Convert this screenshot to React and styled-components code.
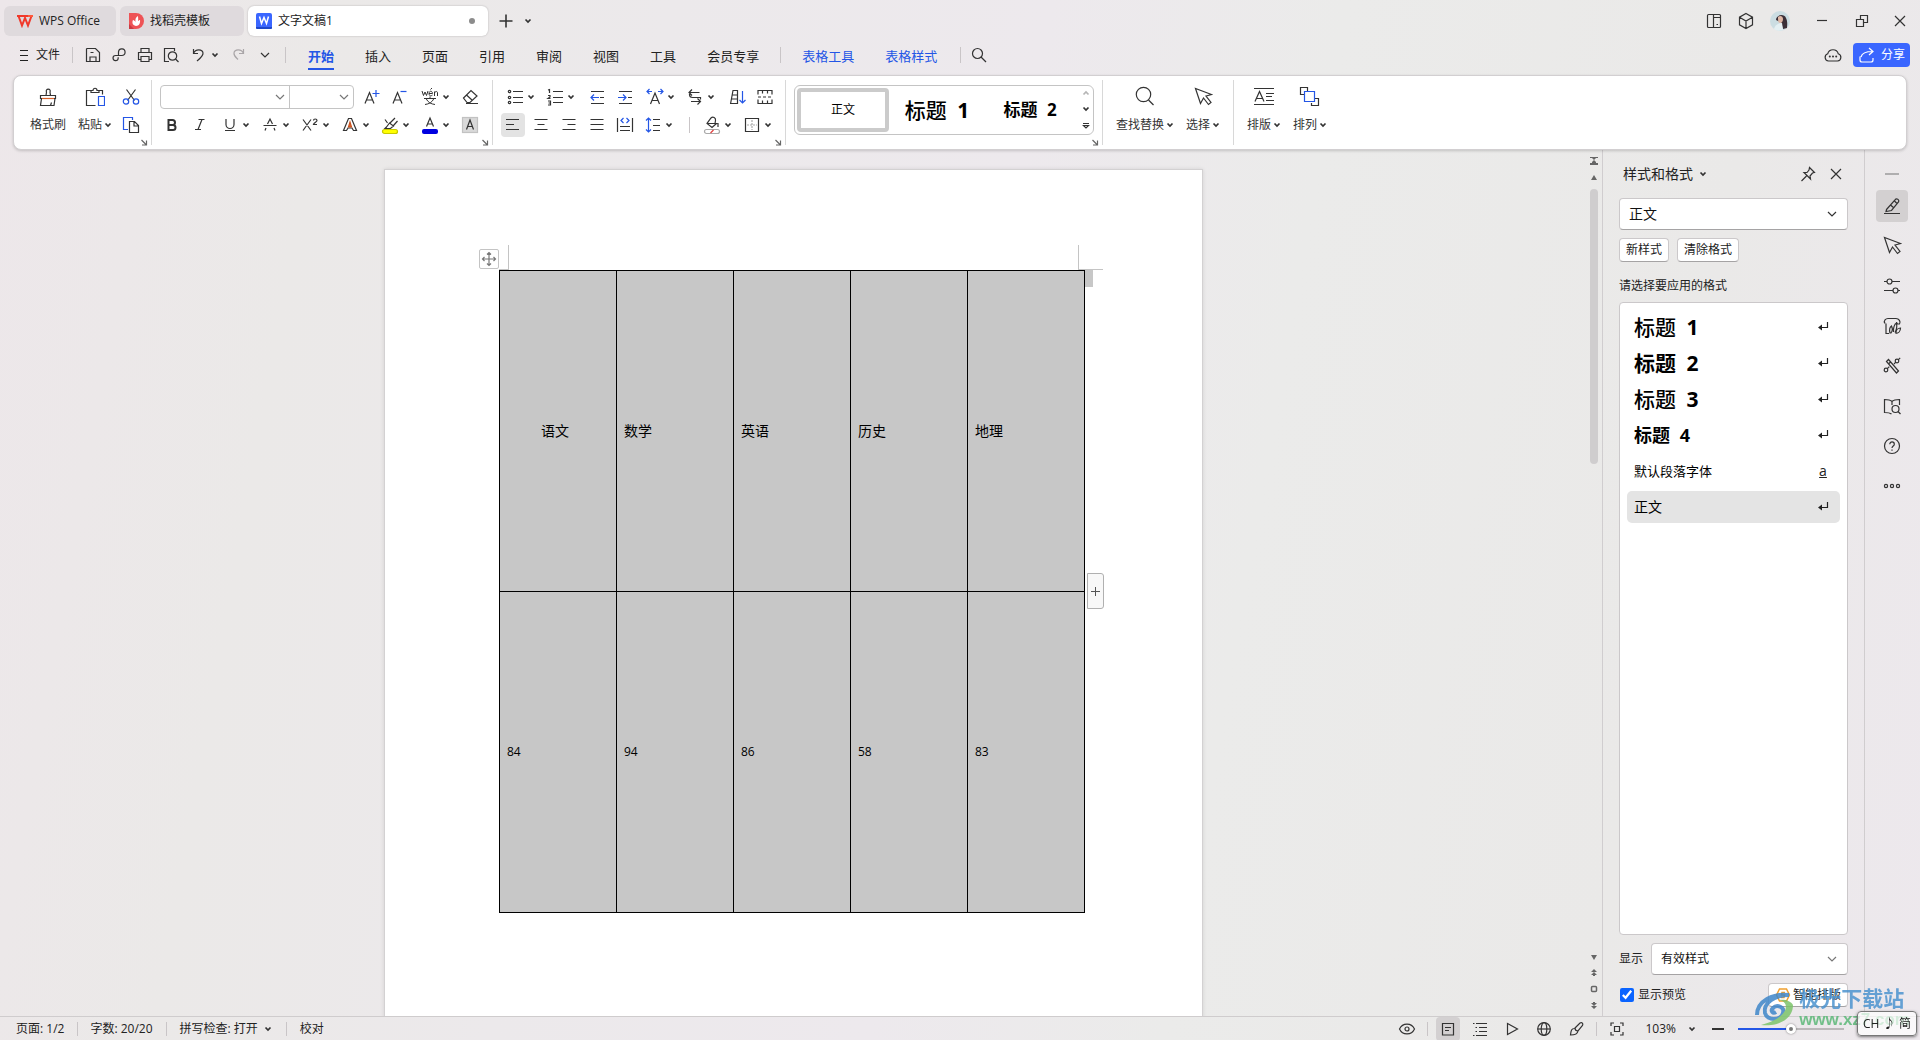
import React from "react";
import styled, { createGlobalStyle, css } from "styled-components";

const BLUE = "#2456e6";
const INK = "#333333";

const GlobalStyle = createGlobalStyle`
  *, *::before, *::after { box-sizing: border-box; }
  body { margin: 0; }
  body, button, input, select {
    font-family: "Open Sans", "Noto Sans CJK SC", sans-serif;
    font-size: 12px;
    line-height: 16px;
    color: #222222;
  }
  button { border: 0; padding: 0; background: none; cursor: pointer; }
  svg { display: block; flex: none; }
`;

const Shell = styled.div`
  height: 100vh;
  display: flex;
  flex-direction: column;
  overflow: hidden;
  background: linear-gradient(100deg, #ede7ea 0%, #ebe9e8 16%, #ece9eb 32%, #ede9ed 50%, #ebebea 64%, #eae9e8 84%, #ede8ed 100%);
`;

/* ---------- icons ---------- */

const Svg = styled.svg`
  fill: none;
  stroke: currentColor;
  stroke-width: ${(p) => p.$w || 1.2};
`;
const Icon = ({ size = 20, w, children }) => (
  <Svg width={size} height={size} viewBox={`0 0 ${size} ${size}`} $w={w} aria-hidden="true">
    {children}
  </Svg>
);
const ChevSvg = styled.svg`
  fill: none;
  stroke: ${(p) => p.$c || "#333333"};
  stroke-width: ${(p) => (p.$wide ? 1.2 : 1.7)};
`;
const Chevron = ({ wide, color }) =>
  wide ? (
    <ChevSvg $wide $c={color} width="10" height="8" viewBox="0 0 10 8" aria-hidden="true">
      <path d="M1 2l4 4 4-4" />
    </ChevSvg>
  ) : (
    <ChevSvg $c={color} width="8" height="6" viewBox="0 0 8 6" aria-hidden="true">
      <path d="M1.500 1.500L4 4l2.500-2.500" />
    </ChevSvg>
  );

const PATHS = {
  save: <><path d="M3.500 4v12.500h13V7.500l-4-4h-8.500zM7 16.500v-4.500h6v4.500M7.500 7.500h3" /></>,
  exportLink: <><path d="M9.500 10.500V6.800a3.300 3.300 0 1 1 3.300 3.700H6.500a2.600 2.600 0 1 0 2.700 2.800v-1" /></>,
  print: <><path d="M6 7.500v-4h8v4M6 14.500H3.500v-7h13v7H14M6 11.500h8v5H6z" /></>,
  preview: <><path d="M8 16.500H3.500v-13h10V6M3.500 3.500h9" /><circle cx="11.500" cy="11" r="4.200" /><path d="M14.500 14l3 3" /></>,
  undo: <path d="M5.500 4v4.500H10M5.500 8.500c2-5 9-4.500 9.500-.5.300 3-3 5.500-6 8" />,
  redo: <path d="M14.500 4v4.500H10M14.500 8.500c-2-5-9-4.500-9.500-.5-.300 3 2 4.500 4 6.500" />,
  search: <><circle cx="8.500" cy="8.500" r="5" /><path d="M12 12l5 5" /></>,
  brush: <><path d="M2.500 8.500h15v3h-15zM3.500 11.500L2.500 18.500h13.500l1-7M8 8.500l.500-3.500a2 2 0 1 1 3.500 0l.500 3.500M12.500 18.500l1-3" /><path d="M4 11.500h12" stroke="#d8622c" /></>,
  paste: <><path d="M6 3.500H1.500v15h9M14.500 3.500H17.500v4M6 5.500v-2h2c0-3 4-3 4 0h2v2z" /><path d="M13.500 9.500h6v9h-6z" stroke={BLUE} /></>,
  cut: <><path d="M5.500 2.500l8 11M14.500 2.500l-8 11" /><g stroke={BLUE}><circle cx="5" cy="14.500" r="2.700" /><circle cx="15" cy="14.500" r="2.700" /></g></>,
  copy: <><path d="M7 14.500H2.500v-12h9V5" stroke={BLUE} /><path d="M8.500 6.500h5l4 4v7h-9zM13 6.500v4.500h4.500" /></>,
  eraser: <><path d="M3.500 11l7.500-7.500L17 9l-7 6.500H7zM6.500 8l6 5.500M6 16.500h12" /></>,
  bullets: <><path d="M8 4.500h10M8 10.500h10M8 15.500h10" /><g><circle cx="4.500" cy="4.500" r="1.200" /><circle cx="4.500" cy="10.500" r="1.200" /><circle cx="4.500" cy="15.500" r="1.200" /></g></>,
  outdent: <><path d="M4 4.500h13M13 10.500h4M4 16.500h13" /><path d="M4 10.500h8M7 7.500l-3 3 3 3" stroke={BLUE} /></>,
  indent: <><path d="M4 4.500h13M13 10.500h4M4 16.500h13" /><path d="M3 10.500h8M8 7.500l3 3-3 3" stroke={BLUE} /></>,
  charWidth: <><path d="M5.500 17L10 6l4.500 11M7 13.500h6" /><path d="M2 4.500h5M13 4.500h5M4.500 2L2 4.500 4.500 7M15.500 2L18 4.500 15.500 7" stroke={BLUE} /></>,
  direction: <><path d="M7 2.500L4 5.500l3 3M4 5.500h10.500M4.500 5.500v2a3 3 0 0 0 3 3h8v2M6 14.500h9.500M12.500 11.500l3 3-3 3" /></>,
  sort: <><path d="M3.500 17l2.500-13.500h4.500V17M5.500 8h5M4.500 12h6M3 16.500h7.500" /><path d="M15.500 4v12M12.500 13l3 3 3-3" stroke={BLUE} /></>,
  tableGrid: <><path d="M3 7.500v-4h14v4M3 12.500v4h14v-4M7.500 3.500v3M12.500 3.500v3M7.500 13.500v3M12.500 13.500v3" /><path d="M3 10h14" strokeDasharray="3 2" /></>,
  alignLeft: <path d="M3 4.500h13M3 9.500h8M3 14.500h13" />,
  alignCenter: <path d="M3.500 4.500h13M6.500 9.500h7M3.500 14.500h13" />,
  alignRight: <path d="M3.500 4.500h13M8.500 9.500h8M3.500 14.500h13" />,
  justify: <path d="M3.500 4.500h13M3.500 9.500h13M3.500 14.500h13" />,
  distribute: <><path d="M2.500 3v14M17.500 3v14M5 11.500h10M5 15.500h10" /><path d="M8.500 3L6 5.500 8.500 8M11.500 3L14 5.500 11.500 8" stroke={BLUE} /></>,
  lineSpacing: <><path d="M10 4.500h7M10 10.500h7M10 15.500h7" /><path d="M5.500 3v14M3 5.500L5.500 3 8 5.500M3 14.500L5.500 17 8 14.500" stroke={BLUE} /></>,
  fill: <><path d="M5 8.500h9.500L10 12.500 5 8.500l4-5.500c2-2 5 0 4.500 2.500L13 8.500M16 8v4" /><rect x="2.500" y="14.500" width="15" height="4" rx="2" stroke="#aaa" /><path d="M8.500 18l3-3" stroke="#e04040" /></>,
  border: <><path d="M3.500 3.500h13v13h-13z" /><path d="M10 5v10M5 10h10" stroke="#aaa" strokeDasharray="2 1" /></>,
  bigSearch: <><circle cx="9.500" cy="8.500" r="7.200" /><path d="M14.500 14l5 5" /></>,
  pointer: <path d="M2.500 1.500l5 15 3-5.500 5 6.500 2.500-2-5-6.500 5.500-1.500z" />,
  layoutText: <><path d="M1 2.500h20M1 18.500h20M13 7.500h8M13 10.500h6M13 14.500h8M2 15.500L6.500 5.500 11 15.500M3.500 12.500h6" /></>,
  arrange: <><path d="M5 8.500H1.500v-7h7V5M16 12.500h3.500v7h-7V17" /><path d="M5.500 5.500h10v10h-10z" stroke={BLUE} /></>,
  split: <><rect x="3.500" y="3.500" width="13" height="13" rx="1" /><path d="M9.500 3.500v13M9.500 6.500h7M12.500 13.500h1.500" /></>,
  cube: <><path d="M10 2.500l6.500 3.700v7.600L10 17.500l-6.500-3.700V6.200zM3.500 6.200L10 10l6.500-3.800M10 10v7.500" /></>,
  minimise: <path d="M5 9.500h10" />,
  railMinus: <path d="M3 10h14" />,
  restore: <><path d="M4.500 8.500h7v7h-7z" /><path d="M8.500 8.500v-4h7v7h-4" /></>,
  close: <path d="M5 5l10 10M15 5L5 15" />,
  cloud: <><path d="M5.500 16a3.700 3.700 0 0 1-.8-7.200 5.500 5.500 0 0 1 10.600 0 3.700 3.700 0 0 1-.8 7.200z" /><g fill="currentColor" stroke="none"><circle cx="6.800" cy="11.500" r="1" /><circle cx="10" cy="11.500" r="1" /><circle cx="13.200" cy="11.500" r="1" /></g></>,
  share: <><path d="M3 11.500v3.500a2 2 0 0 0 2 2h9a2 2 0 0 0 2-2v-2M4 12c1-4 5-5.500 11.500-5.500M12 3l4 3.500-4 3.500" /></>,
  pin: <path d="M11.500 3.500l5 5-2 .500-2.500 3 .5 3-6.500-6.500h3l2-2.500zM8.500 12l-5 5" />,
  pen: <><path d="M4.500 13.500l8.500-9.500a2 2 0 0 1 3.500 2l-7 8.500-5.500 1zM8.500 9l3.500 3M2 17.500h16M12 4.500l3 3" /></>,
  sliders: <><circle cx="7.500" cy="5.500" r="2.500" /><circle cx="13.500" cy="14.500" r="2.500" /><path d="M2 5.500h3M10 5.500h8M2 14.500h9M16 14.500h2" /></>,
  chartDoc: <><path d="M4 7.500V17.500h3M3 7.500c-2-3 1-5 3-5h8c3 0 5 3 3.500 5.500h-2c-1-1-1-2-1-2" /><path d="M8 17c-1-4 0-6 1.500-7 1 2 1 5-.5 7zM11.500 16c-.5-4 1-8 3-9 .5 3 0 7-1.500 9.500M14 17c0-3 2-5 4.500-5 0 3-2 5.500-5 5.500" /></>,
  magic: <><path d="M4.500 5.500l2-2 10 11.500-2 2zM6.500 8l2-2" /><circle cx="15" cy="5" r="1.800" /><path d="M16.200 3.800l2-2M13.800 6.200L12 8" /><circle cx="4" cy="14" r="1.800" /><path d="M5.300 12.700l2-2" /></>,
  bookSearch: <><path d="M10 5.500c-2-2-4.500-2-7.500-2v13c3 0 5 0 7 1.500M10 5.500c2-2 4.500-2 7.500-2V9M10 5.500V9" /><circle cx="13.500" cy="13" r="3.500" /><path d="M16 15.500l2.500 2.500" /></>,
  help: <><circle cx="10" cy="10" r="7.500" /><path d="M7.800 8.200c0-3 4.500-3 4.500 0 0 1.800-2.300 1.800-2.300 3.800M10 13.500v1.300" /></>,
  more: <><circle cx="4" cy="10" r="1.600" /><circle cx="10" cy="10" r="1.600" /><circle cx="16" cy="10" r="1.600" /></>,
  eye: <><path d="M2.500 10c3-6.500 12-6.500 15 0-3 6.500-12 6.500-15 0z" /><circle cx="10" cy="10" r="2" /></>,
  pageView: <><path d="M4.500 4.500h11v11.500h-11zM7 8.500h6M7 11.500h4" /></>,
  outline: <><path d="M6 4.500h11M9 8.500h8M9 12.500h8M6 16.500h11M3 4.500h1.500M5.500 8.500h1.500M5.500 12.500h1.500M3 16.500h1.500" /></>,
  play: <path d="M5.500 4.500v11l10-5.500z" />,
  globe: <><circle cx="10" cy="10" r="6.300" /><ellipse cx="10" cy="10" rx="2.800" ry="6.300" /><path d="M3.700 10h12.600" /></>,
  pencil: <path d="M9 9l5-5c2-1 3.500.500 2.500 2.500L12 12c-2 0-3-1-3-3zM8.500 9.500c-3 0-3.500 2-4 6.500 4 0 7-1 7.500-4" />,
  fit: <><path d="M4 7V4h3M13 4h3v3M16 13v3h-3M7 16H4v-3" /><path d="M7.500 7.500h5v5h-5z" /></>,
  enter: <><path d="M14.500 5v5.500H6" /><path d="M9 7.500v6L5 10.500z" fill="currentColor" stroke="none" /></>,
};
const I = ({ n, size, w }) => <Icon size={size} w={w}>{PATHS[n]}</Icon>;

/* ---------- title bar ---------- */

const TitleBar = styled.header`
  flex: none;
  display: flex;
  align-items: center;
  gap: 4px;
  height: 40px;
  padding: 2px 2px 0 4px;
`;
const Tab = styled.button`
  display: flex;
  align-items: center;
  gap: 6px;
  width: ${(p) => p.$w}px;
  height: 30px;
  padding: 0 ${(p) => p.$pad || 8}px;
  border-radius: 6px;
  white-space: nowrap;
  background: ${(p) => (p.$active ? "#ffffff" : "#dfdadd")};
  box-shadow: ${(p) => (p.$active ? "0 0 2px rgba(0,0,0,.25)" : "none")};
`;
const UnsavedDot = styled.i`
  width: 6px;
  height: 6px;
  margin: 0 5px 0 auto;
  border-radius: 50%;
  background: #8c8c8c;
`;
const IconButton = styled.button`
  display: flex;
  flex: none;
  align-items: center;
  justify-content: center;
  width: ${(p) => p.$w || 24}px;
  height: ${(p) => p.$h || 24}px;
  border-radius: 4px;
  color: ${(p) => (p.$muted ? "#aaa6a8" : INK)};
  background: ${(p) => (p.$on ? p.$onColor || "#e3e3e3" : "transparent")};
  margin-left: ${(p) => (p.$lead ? 4 : 0)}px;
`;
const TitleTools = styled.div`
  display: flex;
  align-items: center;
  margin-left: auto;
`;
const WindowButtons = styled.div`
  display: flex;
  margin-left: 4px;
`;

/* ---------- menu row ---------- */

const MenuRow = styled.nav`
  flex: none;
  display: flex;
  align-items: center;
  height: 35px;
  padding: 0 10px 6px 16px;
`;
const FileButton = styled.button`
  display: flex;
  align-items: center;
  gap: 4px;
`;
const VLine = styled.i`
  flex: none;
  width: 1px;
  height: ${(p) => p.$h || 16}px;
  margin: 0 ${(p) => p.$r || 0}px 0 ${(p) => p.$l || 0}px;
  background: #c9c5c7;
`;
const QuickTools = styled.div`
  display: flex;
  align-items: center;
  gap: 2px;
`;
const UndoButton = styled.button`
  display: flex;
  align-items: center;
  gap: 3px;
  margin: 0 6px 0 3px;
  color: ${INK};
`;
const MenuTabs = styled.div`
  display: flex;
  gap: 31px;
`;
const MenuTab = styled.button`
  font-size: 13px;
  line-height: 24px;
  height: 26px;
  margin-top: 4px;
  white-space: nowrap;
  color: ${(p) => (p.$blue || p.$active ? BLUE : "#222222")};
  font-weight: ${(p) => (p.$active ? 700 : 400)};
  border-bottom: 2px solid ${(p) => (p.$active ? BLUE : "transparent")};
`;
const MenuEnd = styled.div`
  display: flex;
  align-items: center;
  gap: 8px;
  margin-left: auto;
`;
const ShareButton = styled.button`
  display: flex;
  align-items: center;
  gap: 4px;
  height: 24px;
  padding: 0 5px 0 4px;
  border-radius: 4px;
  color: #ffffff;
  background: #3a66ff;
`;

/* ---------- ribbon ---------- */

const Ribbon = styled.section`
  flex: none;
  display: flex;
  height: 75px;
  margin: 0 13px;
  padding-left: 8px;
  border: 1px solid #d2cfd1;
  border-radius: 8px;
  background: #ffffff;
  box-shadow: 0 1px 3px rgba(0, 0, 0, 0.18);
  position: relative;
  z-index: 1;
`;
const Group = styled.div`
  position: relative;
  display: flex;
  flex-direction: ${(p) => (p.$rows ? "column" : "row")};
  gap: ${(p) => (p.$rows ? 4 : p.$gap || 0)}px;
  margin: 4px 0;
  padding: 5px ${(p) => p.$px || (p.$rows ? 10 : 8)}px 5px ${(p) => p.$px || 8}px;
  border-right: 1px solid ${(p) => (p.$last ? "transparent" : "#d8d8d8")};
`;
const Row = styled.div`
  display: flex;
  align-items: center;
  gap: ${(p) => (p.$gap === undefined ? 8 : p.$gap)}px;
  height: 24px;
  padding-left: ${(p) => (p.$inset ? 2 : 0)}px;
`;
const Column = styled.div`
  display: flex;
  flex-direction: column;
  gap: 4px;
  margin-left: -5px;
`;
const BigButton = styled.button`
  display: grid;
  grid-template-rows: 24px 24px;
  gap: 4px;
  place-items: center;
  color: ${INK};
`;
const BigLabel = styled.span`
  display: flex;
  align-items: center;
  gap: 2px;
  white-space: nowrap;
`;
const SplitButton = styled.button`
  display: flex;
  align-items: center;
  width: 32px;
  height: 24px;
  margin-left: ${(p) => (p.$lead ? 4 : 0)}px;
  color: ${INK};
`;
const Glyph = styled.span`
  display: flex;
  justify-content: center;
  width: 24px;
`;
const Launcher = styled.button`
  position: absolute;
  right: 2px;
  bottom: -2px;
  color: #666666;
`;
const FontBoxes = styled.div`
  display: flex;
  width: 194px;
  height: 24px;
  border: 1px solid #c4c4c4;
  border-radius: 4px;
`;
const Combo = styled.label`
  display: flex;
  flex: ${(p) => p.$grow} 0 0;
  align-items: center;
  padding-right: 4px;
  min-width: 0;
  & + & { border-left: 1px solid #c4c4c4; }
  input { flex: 1; min-width: 0; border: 0; outline: 0; background: none; }
`;
const Gallery = styled.div`
  display: flex;
  align-items: center;
  width: 300px;
  height: 50px;
  padding: 0 3px 0 2px;
  border: 1px solid #c4c4c4;
  border-radius: 6px;
`;
const StyleCard = styled.button`
  width: ${(p) => p.$w}px;
  height: 44px;
  border: 4px solid ${(p) => (p.$on ? "#cbcbcb" : "transparent")};
  border-radius: 4px;
  color: #000000;
`;
const Heading = styled.span`
  font-size: ${(p) => p.$size}px;
  line-height: 28px;
  font-weight: ${(p) => p.$weight || 400};
  color: #000000;
  white-space: nowrap;
`;
const HeadingNumber = styled.span`
  margin-left: 5px;
  font-family: "Noto Sans", sans-serif;
  font-weight: 700;
`;
const GalleryNav = styled.div`
  display: flex;
  flex-direction: column;
  align-items: center;
  justify-content: space-between;
  height: 40px;
  margin-left: auto;
`;

/* ---------- work area ---------- */

const Work = styled.main`
  flex: 1;
  display: flex;
  min-height: 0;
`;
const Canvas = styled.section`
  flex: 1;
  display: flex;
  justify-content: center;
  min-width: 0;
  padding-top: 19px;
  overflow: hidden;
`;
const Paper = styled.article`
  flex: none;
  width: 819px;
  height: 1160px;
  padding: 100px 114px;
  border: 1px solid #d3d1d2;
  background: #ffffff;
  box-shadow: 0 0 4px rgba(0, 0, 0, 0.1);
`;
const TableFrame = styled.div`
  position: relative;
  width: 586px;
`;
const DataTable = styled.table`
  width: 100%;
  table-layout: fixed;
  border-collapse: collapse;
  background: #c7c7c7;
`;
const Cell = styled.td`
  height: 321px;
  padding: ${(p) => (p.$center ? "0 6px 0 0" : "0 7px")};
  border: 1px solid #000000;
  text-align: ${(p) => (p.$center ? "center" : "left")};
  vertical-align: middle;
  font-size: ${(p) => (p.$number ? 12 : 14)}px;
  color: #000000;
`;
const MoveHandle = styled.button`
  position: absolute;
  left: -20px;
  top: -21px;
  padding: 1px;
  border: 1px solid #c4c4c4;
  border-radius: 2px;
  color: #777777;
  background: #ffffff;
`;
const MarginMark = styled.i`
  position: absolute;
  top: -25px;
  ${(p) => (p.$right ? css`left: 579px; width: 25px; border-left: 1px solid #c4c4c4;` : css`left: 0; width: 10px; border-right: 1px solid #c4c4c4;`)}
  height: 25px;
  border-bottom: 1px solid #c4c4c4;
`;
const RowEnd = styled.i`
  position: absolute;
  left: 586px;
  top: 0;
  width: 8px;
  height: 17px;
  background: #c7c7c7;
`;
const AddColumn = styled.button`
  position: absolute;
  left: 588px;
  top: 303px;
  width: 17px;
  height: 36px;
  display: grid;
  place-items: center;
  border: 1px solid #b0b0b0;
  border-radius: 0 3px 3px 0;
  color: #555555;
  background: #f8f8f8;
`;
const ScrollColumn = styled.div`
  display: flex;
  flex-direction: column;
  align-items: center;
  width: 15px;
  padding: 7px 2px 7px 0;
  gap: 8px;
  color: #666666;
`;
const ScrollThumb = styled.i`
  width: 8px;
  height: 275px;
  margin-bottom: auto;
  border-radius: 4px;
  background: #cfcdce;
`;

/* ---------- styles panel ---------- */

const Panel = styled.aside`
  flex: none;
  display: flex;
  flex-direction: column;
  width: 262px;
  padding: 8px 16px 9px 16px;
  border-left: 1px solid #d0cdcf;
`;
const PanelHeader = styled.div`
  display: flex;
  align-items: center;
  height: 32px;
  padding-left: 4px;
`;
const PanelTitle = styled.button`
  display: flex;
  align-items: center;
  gap: 6px;
  margin-right: auto;
  font-size: 14px;
  line-height: 20px;
`;
const SelectBox = styled.span`
  flex: 1;
  display: grid;
  align-items: center;
  height: 32px;
  border: 1px solid #cbc8ca;
  border-bottom-color: #a5a3a4;
  border-radius: 4px;
  background: #ffffff;
  > * { grid-area: 1 / 1; }
  > svg { justify-self: end; margin-right: 10px; pointer-events: none; }
  select {
    appearance: none;
    width: 100%;
    height: 30px;
    padding: 0 9px;
    border: 0;
    outline: 0;
    background: none;
    font-size: ${(p) => p.$size}px;
    color: #111111;
  }
`;
const PanelRow = styled.div`
  display: flex;
  align-items: center;
  gap: 8px;
  margin-top: 8px;
`;
const SmallButton = styled.button`
  display: flex;
  align-items: center;
  gap: 2px;
  height: 24px;
  padding: 0 6px;
  border: 1px solid #cbc8ca;
  border-bottom-color: #a5a3a4;
  border-radius: 4px;
  background: #ffffff;
  white-space: nowrap;
`;
const ListLabel = styled.div`
  margin-top: 8px;
  line-height: 32px;
`;
const StyleList = styled.ul`
  flex: 1;
  display: flex;
  flex-direction: column;
  gap: 4px;
  min-height: 0;
  margin: 0;
  padding: 8px 7px;
  list-style: none;
  border: 1px solid #cbc8ca;
  border-radius: 4px;
  background: #ffffff;
`;
const StyleItem = styled.button`
  display: flex;
  align-items: center;
  justify-content: space-between;
  width: 100%;
  height: 32px;
  padding: 0 7px;
  border-radius: 5px;
  background: ${(p) => (p.$on ? "#e4e4e4" : "transparent")};
`;
const CharMark = styled.span`
  width: 20px;
  font-size: 14px;
  text-align: center;
  text-decoration: underline;
`;
const CheckLabel = styled.label`
  display: flex;
  align-items: center;
  gap: 4px;
  margin-right: auto;
  input { width: 14px; height: 14px; margin: 0 0 0 1px; accent-color: #0a64ff; }
`;
const Rail = styled.nav`
  flex: none;
  display: flex;
  flex-direction: column;
  align-items: center;
  gap: 8px;
  width: 56px;
  padding-right: 2px;
  border-left: 1px solid #d0cdcf;
  > :first-child { margin: 8px 0 -8px; color: #888888; }
`;

/* ---------- status bar ---------- */

const StatusBar = styled.footer`
  flex: none;
  display: flex;
  align-items: center;
  height: 24px;
  padding: 0 76px 0 16px;
  border-top: 1px solid #cfcccd;
  white-space: nowrap;
`;
const StatusButton = styled.button`
  display: flex;
  align-items: center;
  gap: 6px;
`;
const StatusTools = styled.div`
  display: flex;
  align-items: center;
  gap: 8px;
  margin-left: auto;
`;
const ZoomLevel = styled(StatusButton)`
  margin-left: 8px;
`;
const ZoomRange = styled.input`
  appearance: none;
  width: 106px;
  height: 12px;
  margin: 0 0 0 2px;
  background: linear-gradient(to right, ${BLUE} 50%, #bbb8ba 50%) center / 100% 2px no-repeat;
  &::-webkit-slider-thumb {
    appearance: none;
    width: 10px;
    height: 10px;
    border: 3px solid #ffffff;
    border-radius: 50%;
    background: #777777;
    box-shadow: 0 0 2px rgba(0, 0, 0, 0.5);
  }
`;
const Watermark = styled.div`
  position: fixed;
  right: 10px;
  bottom: 10px;
  z-index: 2;
  display: flex;
  align-items: center;
  pointer-events: none;
  opacity: 0.85;
`;
const WatermarkText = styled.div`
  display: flex;
  flex-direction: column;
  font-weight: 700;
`;
const SiteName = styled.span`
  font-size: 21px;
  line-height: 24px;
  color: #4c93cf;
`;
const SiteUrl = styled.span`
  font: 700 17px/20px "Liberation Sans", sans-serif;
  color: #5cb878;
`;
const ImeBox = styled.div`
  position: fixed;
  right: 3px;
  bottom: 4px;
  z-index: 3;
  display: flex;
  align-items: center;
  justify-content: space-between;
  width: 60px;
  height: 25px;
  padding: 0 5px;
  border: 1px solid #777777;
  border-radius: 4px;
  background: rgba(255, 255, 255, 0.7);
  box-shadow: 0 1px 3px rgba(0, 0, 0, 0.5);
`;

/* ---------- composed parts ---------- */

const Split = ({ label, lead, children }) => (
  <SplitButton aria-label={label} $lead={lead}>
    <Glyph>{children}</Glyph>
    <Chevron />
  </SplitButton>
);
const Tool = ({ n, label, size, ...rest }) => (
  <IconButton aria-label={label} {...rest}>
    <I n={n} size={size} />
  </IconButton>
);
const Launch = () => (
  <Launcher aria-label="更多设置">
    <Svg width="10" height="10" viewBox="0 0 10 10"><path d="M2.500 3l4.500 4.500M7.500 3.500v4.500H3" /></Svg>
  </Launcher>
);
const Title = ({ size, weight, n }) => (
  <Heading $size={size} $weight={weight}>
    标题 <HeadingNumber>{n}</HeadingNumber>
  </Heading>
);

const MENU = ["开始", "插入", "页面", "引用", "审阅", "视图", "工具", "会员专享"];
const SUBJECTS = ["语文", "数学", "英语", "历史", "地理"];
const SCORES = [84, 94, 86, 58, 83];
const RAIL = [["pen", "样式"], ["pointer", "选择"], ["sliders", "属性"], ["chartDoc", "素材"], ["magic", "工具"], ["bookSearch", "查找"], ["help", "帮助"], ["more", "更多"]];

function TopBar() {
  return (
    <TitleBar>
      <Tab $w={112} $pad={13}>
        <svg width="16" height="14" viewBox="0 0 16 14" fill="none" stroke="#f0392b" strokeWidth="2">
          <path d="M0 2h12.500M1.500 2l3.500 9.500L8 4l3 7.500L14.500 2" /><path d="M11 2h5" stroke="#ff5a3a" />
        </svg>
        WPS Office
      </Tab>
      <Tab $w={124}>
        <svg width="16" height="16" viewBox="0 0 16 16">
          <path d="M1 0h7a8 8 0 0 1 0 16H1z" fill="#ee5356" />
          <path d="M1 11l5 5H1z" fill="#c93a42" />
          <path d="M8 13c-4-1-4-4-3-6 1 0 2 1 2.500 2C7 6 8 4 10 3c0 2 .5 3 0 5 1-.5 1.500-1 2-1 .5 3-1 6-4 6z" fill="#fff" />
        </svg>
        找稻壳模板
      </Tab>
      <Tab $w={240} $active>
        <svg width="16" height="16" viewBox="0 0 16 16">
          <rect width="16" height="16" rx="2" fill="#3a66ff" />
          <path d="M0 14h16v1a1 1 0 0 1-1 1H1a1 1 0 0 1-1-1z" fill="#1e47c8" />
          <path d="M3.500 3.500l2 7L8 4.500l2.500 6 2-7" fill="none" stroke="#fff" strokeWidth="1.500" />
        </svg>
        文字文稿1
        <UnsavedDot />
      </Tab>
      <IconButton $w={28} aria-label="新建">
        <Icon size={16} w={1.6}><path d="M8 1.500v13M1.500 8h13" /></Icon>
      </IconButton>
      <IconButton $w={8} aria-label="标签列表"><Chevron /></IconButton>
      <TitleTools>
        <Tool n="split" label="分屏" $w={32} />
        <Tool n="cube" label="应用" $w={32} />
        <IconButton $w={36} aria-label="账号">
          <svg width="20" height="20" viewBox="0 0 20 20">
            <circle cx="10" cy="10" r="10" fill="#cbdde2" />
            <path d="M6 9c0-5 8-7 10-2 2 4 1 8 1 10l-4 1-2-7-3-1z" fill="#3b3038" />
            <path d="M8 6c2-2 5-1 5 2 0 2-1 4-3 4S8 9 8 6z" fill="#dfb8a6" />
            <path d="M4 18c1-4 4-6 8-6l1 7c-3 1-7 1-9-1z" fill="#e4f0f3" />
          </svg>
        </IconButton>
        <WindowButtons>
          <Tool n="minimise" label="最小化" $w={40} />
          <Tool n="restore" label="还原" $w={40} />
          <Tool n="close" label="关闭" $w={36} />
        </WindowButtons>
      </TitleTools>
    </TitleBar>
  );
}

function Menu() {
  return (
    <MenuRow>
      <FileButton>
        <Icon size={16}><path d="M4 3.500h8M4 8.500h8M4 13.500h8" /></Icon>
        文件
      </FileButton>
      <VLine $l={12} $r={8} />
      <QuickTools>
        <Tool n="save" label="保存" />
        <Tool n="exportLink" label="输出" />
        <Tool n="print" label="打印" />
        <Tool n="preview" label="打印预览" />
        <UndoButton aria-label="撤销"><I n="undo" /><Chevron /></UndoButton>
        <Tool n="redo" label="重做" $muted />
        <IconButton aria-label="自定义"><Chevron wide /></IconButton>
      </QuickTools>
      <VLine $l={8} $r={22} />
      <MenuTabs>
        {MENU.map((m, i) => <MenuTab key={m} $active={i === 0}>{m}</MenuTab>)}
      </MenuTabs>
      <VLine $l={21} $r={21} />
      <MenuTabs>
        <MenuTab $blue>表格工具</MenuTab>
        <MenuTab $blue>表格样式</MenuTab>
      </MenuTabs>
      <VLine $l={23} $r={6} />
      <Tool n="search" label="搜索" />
      <MenuEnd>
        <Tool n="cloud" label="云同步" />
        <ShareButton><I n="share" />分享</ShareButton>
      </MenuEnd>
    </MenuRow>
  );
}

function Tools() {
  return (
    <Ribbon>
      <Group $gap={12}>
        <BigButton><I n="brush" /><BigLabel>格式刷</BigLabel></BigButton>
        <BigButton><I n="paste" /><BigLabel>粘贴<Chevron /></BigLabel></BigButton>
        <Column>
          <Tool n="cut" label="剪切" />
          <Tool n="copy" label="复制" />
        </Column>
        <Launch />
      </Group>
      <Group $rows>
        <Row>
          <FontBoxes>
            <Combo $grow={131}><input aria-label="字体" /><Chevron wide color="#777" /></Combo>
            <Combo $grow={62}><input aria-label="字号" /><Chevron wide color="#777" /></Combo>
          </FontBoxes>
          <IconButton $w={20} aria-label="增大字号">
            <Icon><path d="M3 16.500L7.500 5.500 12 16.500M4.500 13h6" /><path d="M10.500 6.500h7M14 3v7" stroke={BLUE} /></Icon>
          </IconButton>
          <IconButton $w={20} aria-label="减小字号">
            <Icon><path d="M3 16.500L7.500 5.500 12 16.500M4.500 13h6" /><path d="M10.500 4.500h6" stroke={BLUE} /></Icon>
          </IconButton>
          <Split label="拼音指南">
            <Icon w={1}><path d="M2 4l1.500 4.500L5 5l1.500 3.500L8 4M9 6.500h3.500c0-3-3.500-3-3.500 0s2.500 2.500 3.500 1.500M10.500 2.500L12 1M14.500 9V4.500M14.500 6c1-2 3-2 3 0v3M4 11.500h12M10 9.500v2M6 11.500c2 4 5 5.500 9 6M14 11.500c-2 4-5 5.500-9 6" /></Icon>
          </Split>
          <Tool n="eraser" label="清除格式" />
        </Row>
        <Row $inset>
          <IconButton $w={20} aria-label="加粗"><Icon w={2}><path d="M6.500 5h4a2.500 2.500 0 0 1 0 5h-4zM6.500 10h4.500a2.500 2.500 0 0 1 0 5H6.500z" /></Icon></IconButton>
          <IconButton $w={20} aria-label="倾斜"><Icon><path d="M8.500 4.500h6M5 14.500h6M12 4.500l-4 10" /></Icon></IconButton>
          <Split label="下划线"><Icon><path d="M6 4v5.500a4 4 0 0 0 8 0V4M5 15.500h10" /></Icon></Split>
          <Split label="删除线"><Icon><path d="M7.500 9L10 4l2.500 5M6 13l-1 2.500M14 13l1 2.500M3.500 10.500h13" /></Icon></Split>
          <Split label="上标"><Icon><path d="M3 4.500l8 11M11 4.500l-8 11M13.500 5.500c0-2 3.500-2 3.500 0 0 1.500-3 2-3.500 4H17" /></Icon></Split>
          <Split label="文字效果">
            <Icon><path d="M3.500 15.500L8.500 3.500h3l5 12h-3L12 13H8l-1.500 2.500z" /><path d="M8.500 12L10 7l1.500 5z" fill="#e0702f" stroke="#c8511f" /></Icon>
          </Split>
          <Split label="突出显示">
            <Icon><path d="M6.500 12l3-4 4 3-3 2.500H5zM10 8l5-5M13.500 10.500l4-4.500M5 4.500L7.500 8" /><rect x="2.500" y="14.500" width="15" height="4" rx="2" fill="#ffff00" stroke="#c9c900" /></Icon>
          </Split>
          <Split label="字体颜色">
            <Icon><path d="M6.500 11.500L10 3l3.500 8.500M7.500 9h5" /><rect x="2" y="14" width="16" height="5" rx="2" fill="#0000e0" stroke="none" /></Icon>
          </Split>
          <IconButton aria-label="字符底纹">
            <Icon><rect x="2.500" y="2.500" width="15" height="15" fill="#d9d9d9" stroke="#c2c2c2" /><path d="M6.500 14.500L10 5l3.500 9.500M7.500 11.500h5" /></Icon>
          </IconButton>
        </Row>
        <Launch />
      </Group>
      <Group $rows>
        <Row $inset>
          <Split label="项目符号"><I n="bullets" /></Split>
          <Split label="编号">
            <Icon><path d="M8 4.500h10M8 10.500h10M8 15.500h10M4.500 6V2.500L3 3M3 8.500h2v1.500L3 11.500h2.500M3 14h2.500v4H3M3.500 16h2" /></Icon>
          </Split>
          <Tool n="outdent" label="减少缩进" $w={20} $lead />
          <Tool n="indent" label="增加缩进" $w={20} />
          <Split label="字符缩放"><I n="charWidth" /></Split>
          <Split label="文字方向"><I n="direction" /></Split>
          <Tool n="sort" label="排序" $w={20} $lead />
          <Tool n="tableGrid" label="表格" $w={20} />
        </Row>
        <Row $gap={4}>
          <Tool n="alignLeft" label="左对齐" $on />
          <Tool n="alignCenter" label="居中" />
          <Tool n="alignRight" label="右对齐" />
          <Tool n="justify" label="两端对齐" />
          <Tool n="distribute" label="分散对齐" />
          <Split label="行距"><I n="lineSpacing" /></Split>
          <VLine $l={12} $r={6} />
          <Split label="底纹颜色"><I n="fill" /></Split>
          <Split label="边框" lead><I n="border" /></Split>
        </Row>
        <Launch />
      </Group>
      <Group>
        <Gallery>
          <StyleCard $w={92} $on>正文</StyleCard>
          <StyleCard $w={96}><Title size={21} weight={500} n={1} /></StyleCard>
          <StyleCard $w={90}><Title size={17} weight={700} n={2} /></StyleCard>
          <GalleryNav>
            <ChevSvg $c="#b5b5b5" width="8" height="6" viewBox="0 0 8 6"><path d="M1.500 4.500L4 2l2.500 2.500" /></ChevSvg>
            <Chevron />
            <svg width="8" height="8" viewBox="0 0 8 8" fill="none" stroke="#333" strokeWidth="1.200"><path d="M1 1.500h6M1.500 3.500L4 6l2.500-2.500z" /></svg>
          </GalleryNav>
        </Gallery>
        <Launch />
      </Group>
      <Group $px={13} $gap={12}>
        <BigButton><I n="bigSearch" size={22} /><BigLabel>查找替换<Chevron /></BigLabel></BigButton>
        <BigButton><I n="pointer" /><BigLabel>选择<Chevron /></BigLabel></BigButton>
      </Group>
      <Group $px={13} $gap={12} $last>
        <BigButton><I n="layoutText" size={22} /><BigLabel>排版<Chevron /></BigLabel></BigButton>
        <BigButton><I n="arrange" size={22} /><BigLabel>排列<Chevron /></BigLabel></BigButton>
      </Group>
    </Ribbon>
  );
}

function Document() {
  return (
    <Canvas>
      <Paper>
        <TableFrame>
          <MarginMark />
          <MarginMark $right />
          <DataTable>
            <tbody>
              <tr>{SUBJECTS.map((s, i) => <Cell key={s} $center={i === 0}>{s}</Cell>)}</tr>
              <tr>{SCORES.map((s) => <Cell key={s} $number>{s}</Cell>)}</tr>
            </tbody>
          </DataTable>
          <MoveHandle aria-label="移动表格">
            <Icon size={16}><path d="M8 2v12M2 8h12M6 3.500L8 1.500l2 2M6 12.500l2 2 2-2M3.500 6L1.500 8l2 2M12.500 6l2 2-2 2" /></Icon>
          </MoveHandle>
          <RowEnd />
          <AddColumn aria-label="添加列">
            <Icon size={9} w={1}><path d="M4.500 0v9M0 4.500h9" /></Icon>
          </AddColumn>
        </TableFrame>
      </Paper>
    </Canvas>
  );
}

function Scroll() {
  const fill = { fill: "currentColor" };
  return (
    <ScrollColumn>
      <svg width="8" height="8" viewBox="0 0 8 8" {...fill}><path d="M0 0h8v1H6L4 3 2 1H0zM4 3l2 2v1h2v2H0V6h2V5z" /></svg>
      <svg width="8" height="8" viewBox="0 0 8 8" {...fill}><path d="M4 2l3 5H1z" /></svg>
      <ScrollThumb />
      <svg width="8" height="8" viewBox="0 0 8 8" {...fill}><path d="M1 2h6L4 7z" /></svg>
      <svg width="8" height="8" viewBox="0 0 8 8" {...fill}><path d="M4 0l3 3H1zM4 3l3 3H5v1H3V6H1z" /></svg>
      <Svg width="8" height="8" viewBox="0 0 8 8" $w={1.5}><rect x="1.500" y="1.500" width="5" height="5" rx="1" /></Svg>
      <svg width="8" height="8" viewBox="0 0 8 8" {...fill}><path d="M3 1h2v1h2L4 5 1 2h2zM1 5h6L4 8z" /></svg>
    </ScrollColumn>
  );
}

function StylesPanel() {
  return (
    <Panel>
      <PanelHeader>
        <PanelTitle>样式和格式<Chevron /></PanelTitle>
        <Tool n="pin" label="固定" $w={32} />
        <Tool n="close" label="关闭窗格" />
      </PanelHeader>
      <PanelRow>
        <SelectBox $size={14}>
          <select aria-label="当前样式" defaultValue="正文"><option>正文</option></select>
          <Chevron wide />
        </SelectBox>
      </PanelRow>
      <PanelRow>
        <SmallButton>新样式</SmallButton>
        <SmallButton>清除格式</SmallButton>
      </PanelRow>
      <ListLabel>请选择要应用的格式</ListLabel>
      <StyleList>
        <li><StyleItem><Title size={21} weight={500} n={1} /><I n="enter" /></StyleItem></li>
        <li><StyleItem><Title size={21} weight={700} n={2} /><I n="enter" /></StyleItem></li>
        <li><StyleItem><Title size={21} weight={500} n={3} /><I n="enter" /></StyleItem></li>
        <li><StyleItem><Title size={18} weight={700} n={4} /><I n="enter" /></StyleItem></li>
        <li><StyleItem><Heading $size={13}>默认段落字体</Heading><CharMark>a</CharMark></StyleItem></li>
        <li><StyleItem $on><Heading $size={14}>正文</Heading><I n="enter" /></StyleItem></li>
      </StyleList>
      <PanelRow>
        <label htmlFor="show-styles">显示</label>
        <SelectBox $size={12}>
          <select id="show-styles" defaultValue="有效样式"><option>有效样式</option></select>
          <Chevron wide color="#777" />
        </SelectBox>
      </PanelRow>
      <PanelRow>
        <CheckLabel><input type="checkbox" defaultChecked />显示预览</CheckLabel>
        <SmallButton>
          <Svg width="16" height="16" viewBox="0 0 16 16" color="#f0a030" $w={1.5}>
            <path d="M4.500 2h7l3 6-3 6h-7l-3-6zM10 5.500H7L6.500 8h3L9 10.500H6" />
          </Svg>
          智能排版
        </SmallButton>
      </PanelRow>
    </Panel>
  );
}

function Status() {
  return (
    <StatusBar>
      <StatusButton>页面: 1/2</StatusButton>
      <VLine $h={14} $l={13} $r={12} />
      <StatusButton>字数: 20/20</StatusButton>
      <VLine $h={14} $l={13} $r={13} />
      <StatusButton>拼写检查: 打开<Chevron /></StatusButton>
      <VLine $h={14} $l={14} $r={13} />
      <StatusButton>校对</StatusButton>
      <StatusTools>
        <Tool n="eye" label="护眼模式" />
        <VLine $h={14} />
        <Tool n="pageView" label="页面视图" $on $onColor="#d3d0d1" />
        <Tool n="outline" label="大纲视图" />
        <Tool n="play" label="阅读版式" />
        <Tool n="globe" label="Web版式" />
        <Tool n="pencil" label="写作模式" />
        <VLine $h={14} />
        <Tool n="fit" label="适合页面" />
        <ZoomLevel>103%</ZoomLevel>
        <IconButton $w={16} aria-label="缩放级别"><Chevron /></IconButton>
        <IconButton $w={20} aria-label="缩小"><Icon size={12} w={2}><path d="M0 6h12" /></Icon></IconButton>
        <ZoomRange type="range" min="0" max="100" defaultValue="50" aria-label="缩放" />
      </StatusTools>
    </StatusBar>
  );
}

export default function App() {
  return (
    <Shell>
      <GlobalStyle />
      <TopBar />
      <Menu />
      <Tools />
      <Work>
        <Document />
        <Scroll />
        <StylesPanel />
        <Rail>
          <Tool n="railMinus" label="折叠" $w={32} $h={32} />
          {RAIL.map(([n, label], i) => (
            <Tool key={n} n={n} label={label} $w={32} $h={32} $on={i === 0} $onColor="#d3d0d1" />
          ))}
        </Rail>
      </Work>
      <Status />
      <Watermark>
        <svg width="44" height="38" viewBox="0 0 44 38" fill="none">
          <path d="M2 26C2 12 18 4 34 6 20 6 8 14 10 24c2 8 16 8 18 0 2-6-6-9-10-5-3 3 0 6 3 4" stroke="#3f86c9" strokeWidth="4" />
          <path d="M6 36c14 2 32-4 32-20-2-4-8-6-14-5 12 2 10 18-18 25z" fill="#7cc36a" />
        </svg>
        <WatermarkText>
          <SiteName>极光下载站</SiteName>
          <SiteUrl>www.xz7.com</SiteUrl>
        </WatermarkText>
      </Watermark>
      <ImeBox><span>CH</span><span>♪</span><span>简</span></ImeBox>
    </Shell>
  );
}
